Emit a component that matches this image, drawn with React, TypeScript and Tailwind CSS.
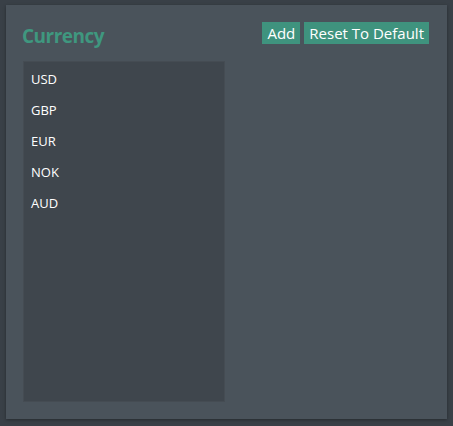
import React from 'react';

const CURRENCIES = ['USD', 'GBP', 'EUR', 'NOK', 'AUD'];

export default function App() {
    return (
        <div
            className="w-[453px] h-[426px] bg-[#394047] pt-[5px] pl-[6px]"
            style={{ fontFamily: '"Open Sans", "Noto Sans", sans-serif' }}
        >
            <div className="w-[441px] h-[414px] bg-[#4a535b] shadow-[0_1px_3px_rgba(0,0,0,0.35)] flex flex-col pl-[17px] pr-[18px]">
                {/* Header */}
                <div className="flex items-start justify-between pt-[17px]">
                    <h2 className="text-[19px] leading-[28px] font-bold text-[#3f977f] tracking-[-0.5px] -ml-[1px]">
                        Currency
                    </h2>
                    <div className="flex gap-[4px]">
                        <button className="h-[22px] px-[5px] bg-[#3f937e] text-white text-[15px] leading-[22px]">
                            Add
                        </button>
                        <button className="h-[22px] px-[5px] bg-[#3f937e] text-white text-[15px] leading-[22px]">
                            Reset To Default
                        </button>
                    </div>
                </div>

                {/* List */}
                <div className="mt-[11px] w-[202px] h-[341px] bg-[#3f464d] border border-[#454c53] pt-[2px]">
                    {CURRENCIES.map((c) => (
                        <div key={c} className="h-[31px] pl-[7px] flex items-center text-[13px] text-white">
                            {c}
                        </div>
                    ))}
                </div>
            </div>
        </div>
    );
}
